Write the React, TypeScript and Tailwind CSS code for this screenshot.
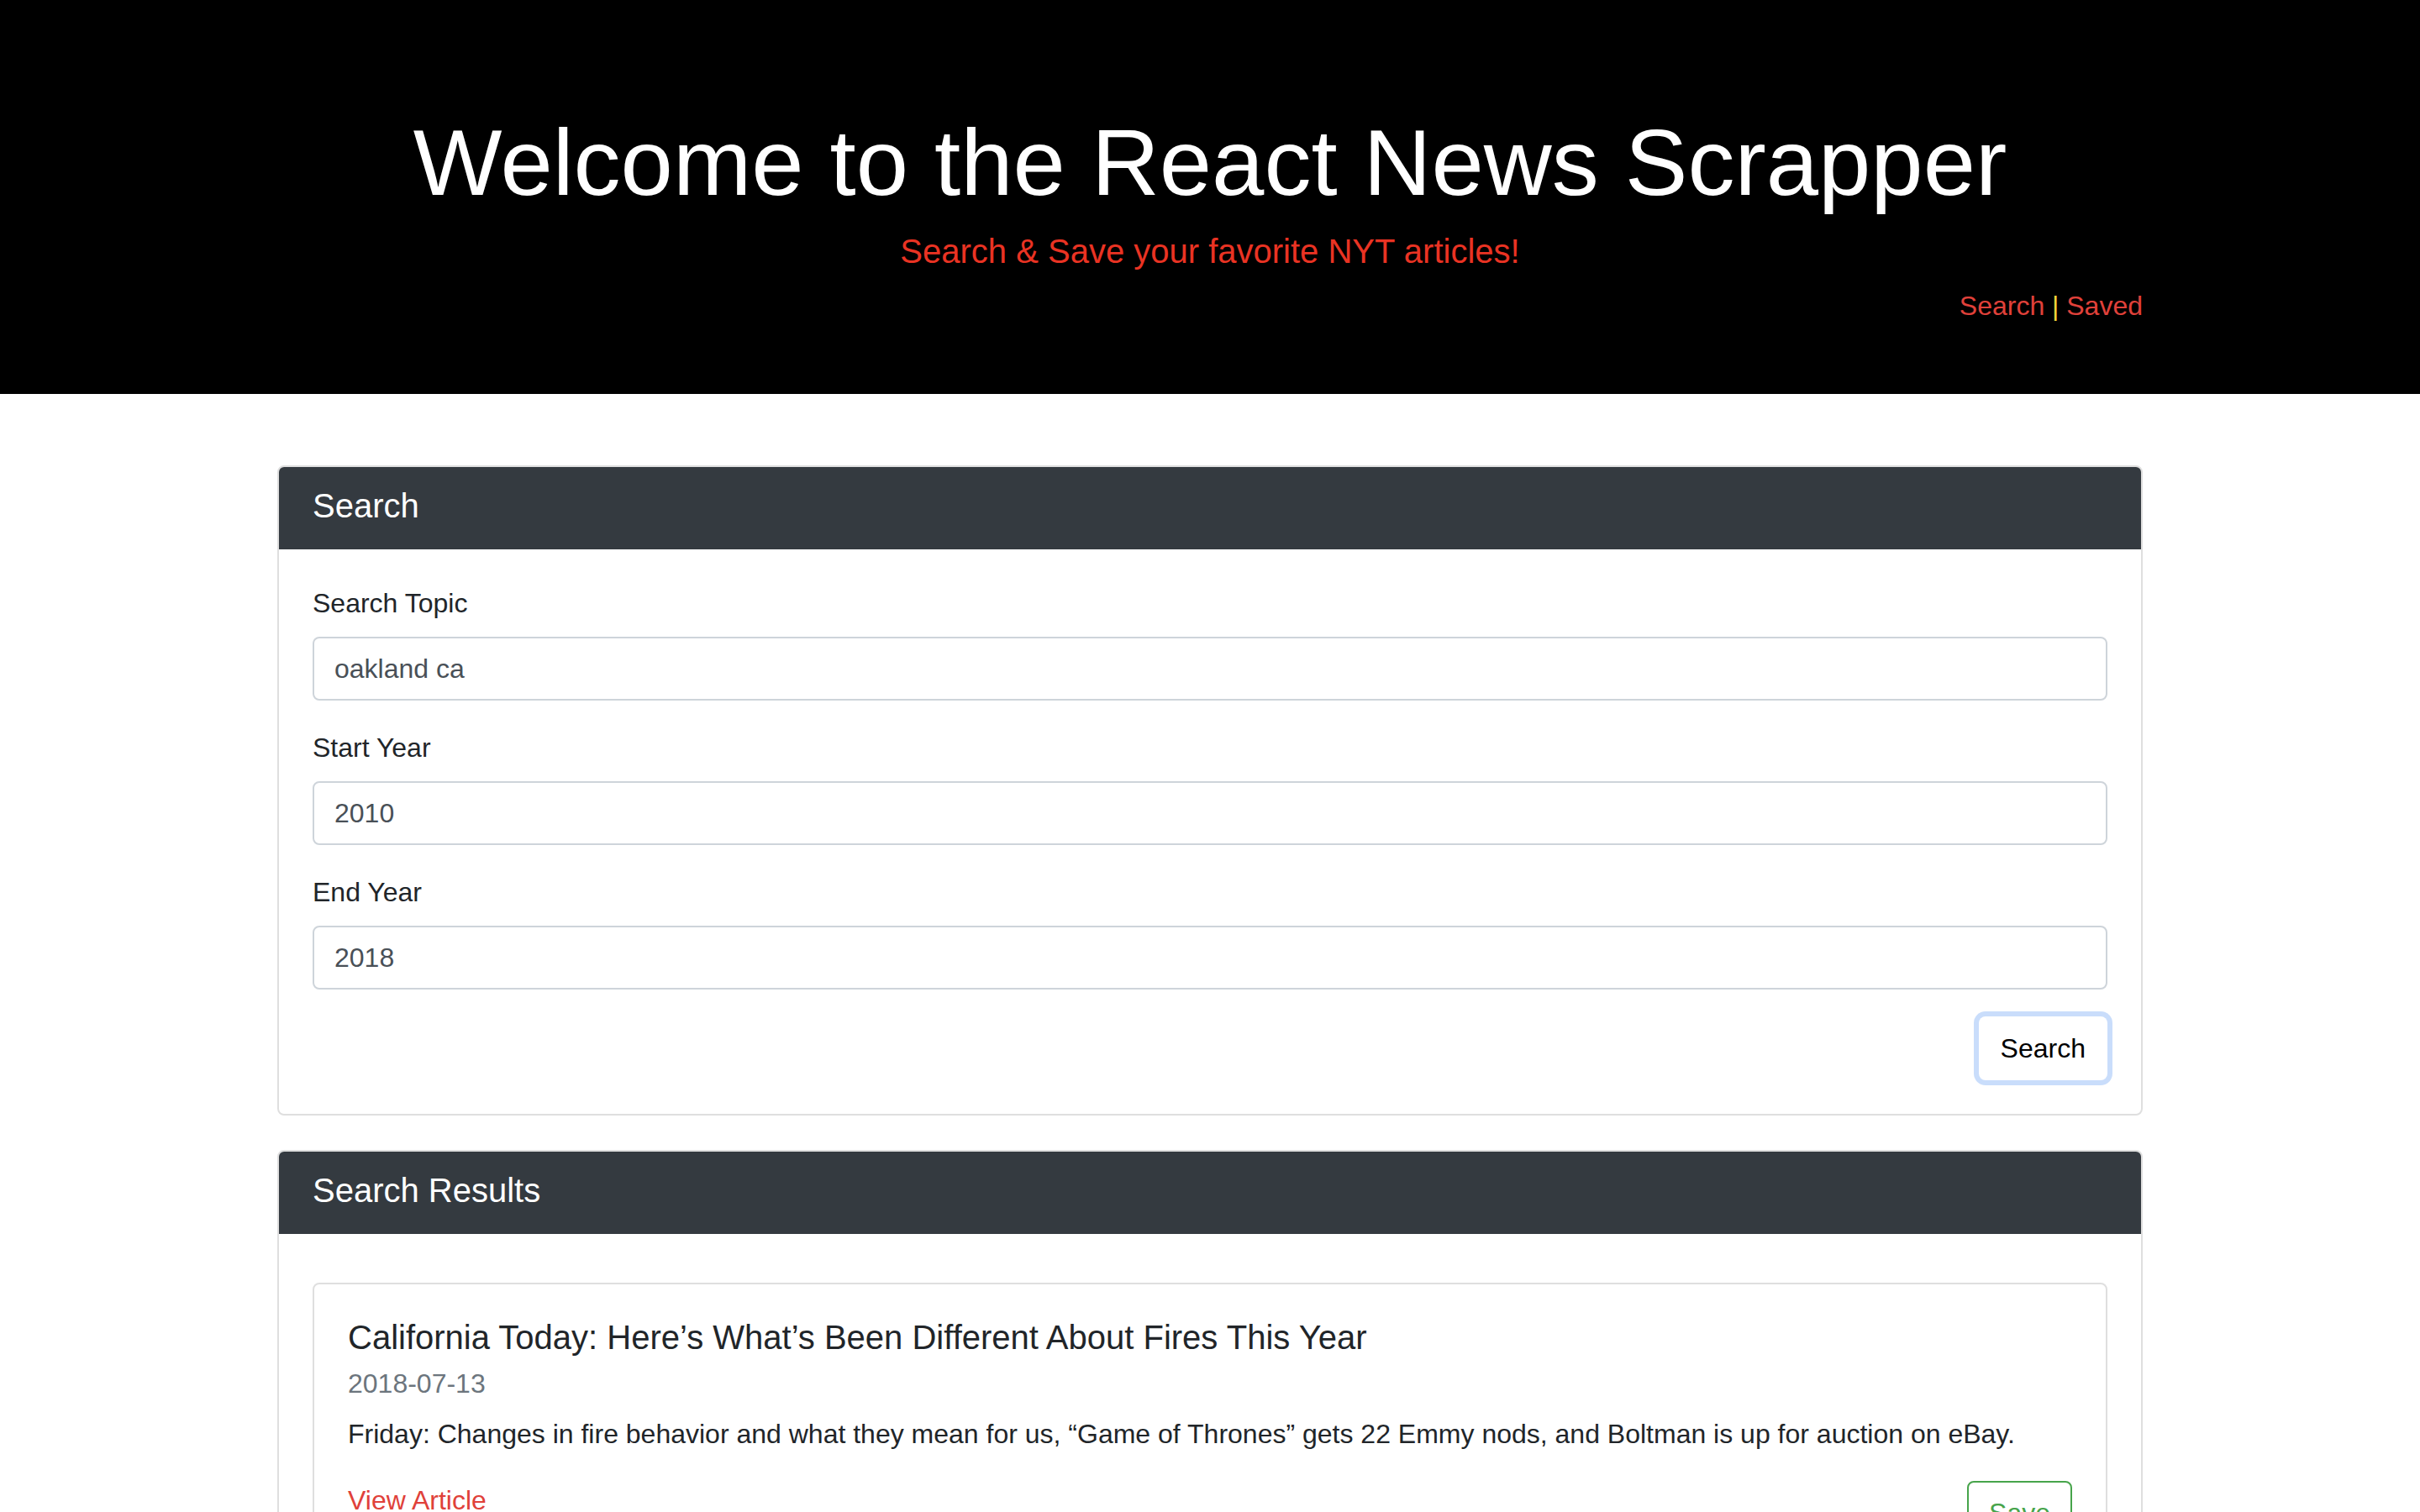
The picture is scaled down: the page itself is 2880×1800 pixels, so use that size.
import React, { useState } from 'react';

const articles = [
  {
    id: 1,
    title: 'California Today: Here’s What’s Been Different About Fires This Year',
    date: '2018-07-13',
    snippet:
      'Friday: Changes in fire behavior and what they mean for us, “Game of Thrones” gets 22 Emmy nods, and Boltman is up for auction on eBay.',
  },
];

const Field = ({ label, value, onChange }) => (
  <div className="mb-[32px]">
    <label className="block mb-[16px] text-[32px] leading-[48px]">{label}</label>
    <input
      type="text"
      value={value}
      onChange={(e) => onChange(e.target.value)}
      className="block w-full h-[76px] px-[24px] border-2 border-[#ced4da] rounded-[8px] text-[32px] text-[#495057] bg-white outline-none"
    />
  </div>
);

const Card = ({ title, children, bodyClass }) => (
  <div className="border-2 border-[#dfdfdf] rounded-[8px] bg-white">
    <div className="bg-[#343a40] rounded-t-[6px] px-[40px] pt-[22px] pb-[28px] text-[40px] leading-[48px] text-white">
      {title}
    </div>
    <div className={bodyClass}>{children}</div>
  </div>
);

export default function App() {
  const [topic, setTopic] = useState('oakland ca');
  const [startYear, setStartYear] = useState('2010');
  const [endYear, setEndYear] = useState('2018');

  return (
    <div className="min-h-screen bg-white text-[#212529] font-['Liberation_Sans','Helvetica_Neue',Arial,sans-serif]">
      {/* jumbotron */}
      <header className="bg-black pt-[127px] pb-[81px] text-center">
        <h1 className="text-[112px] leading-[134px] font-light text-white">
          Welcome to the React News Scrapper
        </h1>
        <p className="mt-[8px] text-[40px] leading-[60px] font-light text-[#ea3323]">
          Search &amp; Save your favorite NYT articles!
        </p>
        <nav className="mx-auto mt-[11px] w-[2220px] text-right text-[32px] leading-[48px]">
          <a href="#" className="text-[#e0413a]">Search</a>
          <span className="text-[#f2d43a]"> | </span>
          <a href="#" className="text-[#e0413a]">Saved</a>
        </nav>
      </header>

      <main className="mx-auto mt-[85px] w-[2220px] pb-[60px]">
        <Card title="Search" bodyClass="p-[40px]">
          <Field label="Search Topic" value={topic} onChange={setTopic} />
          <Field label="Start Year" value={startYear} onChange={setStartYear} />
          <Field label="End Year" value={endYear} onChange={setEndYear} />
          <div className="flex justify-end">
            <button className="h-[76px] px-[24px] border-2 border-transparent rounded-[8px] text-[32px] text-black bg-white ring-[6px] ring-[#c9ddfb]">
              Search
            </button>
          </div>
        </Card>

        <div className="mt-[41px]">
          <Card title="Search Results" bodyClass="px-[40px] pt-[58px] pb-[40px]">
            {articles.map((a) => (
              <div key={a.id} className="border-2 border-[#dfdfdf] rounded-[8px] px-[40px] pt-[39px] pb-[40px]">
                <h5 className="text-[40px] leading-[48px]">{a.title}</h5>
                <h6 className="mt-[12px] text-[32px] leading-[38px] text-[#6c757d]">{a.date}</h6>
                <p className="mt-[17px] text-[32px] leading-[48px]">{a.snippet}</p>
                <div className="mt-[31px] flex items-start justify-between">
                  <a href="#" className="text-[32px] leading-[48px] text-[#e0413a]">View Article</a>
                  <button className="mt-[1px] h-[76px] px-[24px] border-2 border-[#47a44b] rounded-[8px] text-[32px] text-[#47a44b] bg-white">
                    Save
                  </button>
                </div>
              </div>
            ))}
          </Card>
        </div>
      </main>
    </div>
  );
}
